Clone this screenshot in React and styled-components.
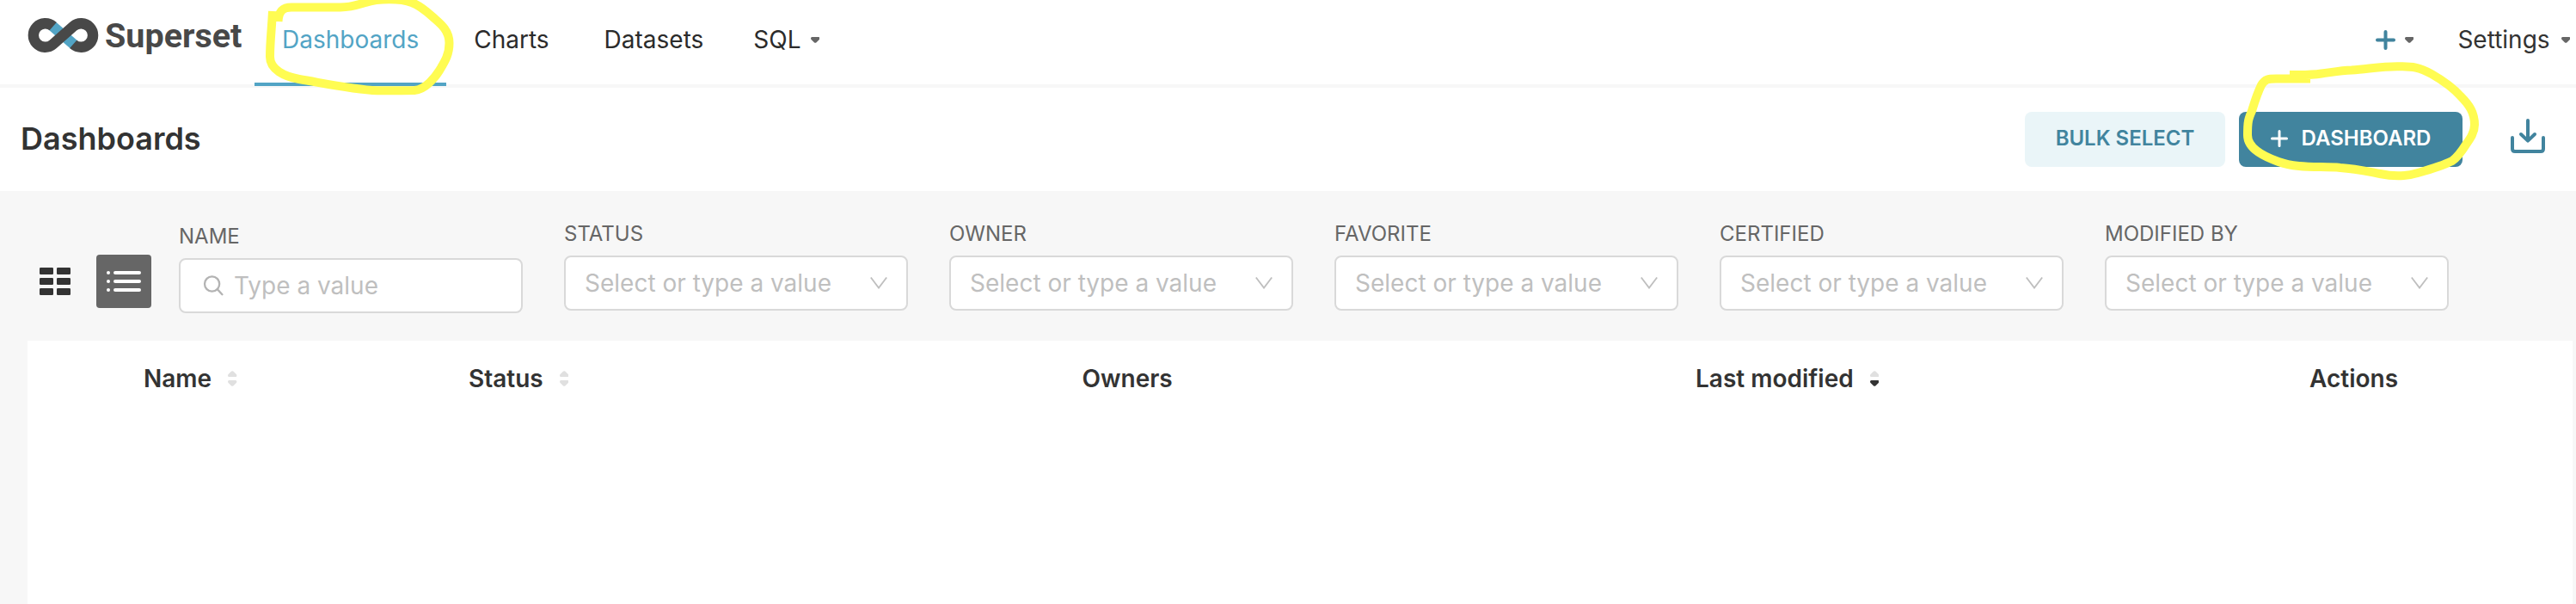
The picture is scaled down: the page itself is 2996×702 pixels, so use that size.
import React from 'react';
import styled, { createGlobalStyle } from 'styled-components';

const GlobalStyle = createGlobalStyle`
  * { box-sizing: border-box; }
  body {
    margin: 0;
    background: #f7f7f7;
    color: #333;
    font-family: Inter, 'Liberation Sans', sans-serif;
    font-size: 28px;
  }
`;

const Page = styled.div`
  position: relative;
  display: flex;
  flex-direction: column;
  height: 702px;
  overflow: hidden;
`;

const NavBar = styled.header`
  display: flex;
  flex: none;
  height: 102px;
  background: #fff;
  border-bottom: 4px solid #f7f7f7;
`;

const Brand = styled.a`
  display: flex;
  width: 296px;
  padding: 19px 0 0 32px;
`;

const BrandName = styled.span`
  margin-left: 7px;
  font: 700 39.5px/46px Roboto, sans-serif;
  color: #484848;
`;

const LogoMark = styled.svg`
  display: block;
  margin-top: 1px;
`;

const NavItem = styled.a`
  display: flex;
  align-items: center;
  gap: ${(p) => p.$gap || 0}px;
  height: 100px;
  padding: 0 32px 4px ${(p) => p.$left || 32}px;
  border-bottom: 4px solid ${(p) => (p.$active ? '#52a4c5' : 'transparent')};
  color: ${(p) => (p.$active ? '#52a4c5' : '#2b2b2b')};
`;

const NavRight = styled.div`
  display: flex;
  align-items: center;
  height: 92px;
  margin-left: auto;
  padding-right: 7px;
  gap: 51px;
`;

const NavMenu = styled.a`
  display: flex;
  align-items: center;
  gap: ${(p) => p.$gap}px;
`;

const TitleBar = styled.section`
  display: flex;
  align-items: center;
  flex: none;
  height: 120px;
  padding: 0 36px 0 24px;
  background: #fff;
`;

const Title = styled.h1`
  margin: 0 auto 2px 0;
  font-size: 36px;
  font-weight: 600;
  line-height: 44px;
`;

const Button = styled.button`
  display: flex;
  align-items: center;
  justify-content: center;
  gap: 16px;
  width: ${(p) => p.$width}px;
  height: 64px;
  margin-left: 16px;
  padding: 0 0 2px;
  border: 0;
  border-radius: 8px;
  background: ${(p) => (p.$primary ? '#41849e' : '#eaf5f8')};
  color: ${(p) => (p.$primary ? '#fff' : '#41849e')};
  font: 600 24px/32px Inter, sans-serif;
`;

const ImportButton = styled.a`
  display: flex;
  margin: 0 0 8px 56px;
`;

const FilterBar = styled.section`
  display: flex;
  align-items: flex-start;
  flex: none;
  height: 174px;
  padding: 34px 0 0 32px;
`;

const ViewToggle = styled.div`
  display: flex;
  gap: 16px;
  margin: 40px 32px 0 0;
`;

const ViewButton = styled.div`
  display: flex;
  align-items: center;
  justify-content: center;
  width: 64px;
  height: 62px;
  border-radius: 4px;
  background: ${(p) => (p.$active ? '#666' : 'transparent')};
`;

const Field = styled.label`
  display: flex;
  flex-direction: column;
  gap: 9px;
  width: 400px;
  margin: ${(p) => p.$drop || 0}px 48px 0 0;
`;

const FieldLabel = styled.span`
  font-size: 24px;
  line-height: 32px;
  color: #666;
`;

const Control = styled.div`
  display: flex;
  align-items: center;
  gap: 12px;
  height: 64px;
  padding: 0 22px 0 ${(p) => p.$left}px;
  border: 2px solid #d9d9d9;
  border-radius: 8px;
  background: #fff;
  color: #bfbfbf;
`;

const Placeholder = styled.span`
  flex: 1;
  line-height: 40px;
  white-space: nowrap;
`;

const TablePanel = styled.main`
  flex: 1;
  margin: 0 4px 0 32px;
  background: #fff;
`;

const HeaderRow = styled.div`
  display: grid;
  grid-template-columns: 378px 713.5px 713.5px 714px 1fr;
  align-items: center;
  height: 88px;
  padding-left: 135px;
`;

const HeaderCell = styled.div`
  display: flex;
  align-items: center;
  gap: 19px;
  font-weight: 600;
  line-height: 40px;
`;

const MarkerLayer = styled.svg`
  position: absolute;
  top: 0;
  left: 0;
  pointer-events: none;
`;

const CARET = 'M1.4 0H9Q10.4 0 10.4 1.6 10.4 2.6 9.6 3.3L6.3 6.4Q5.2 7.3 4.1 6.4L.8 3.3Q0 2.6 0 1.6 0 0 1.4 0Z';

const Caret = () => (
  <svg width="10.4" height="7" viewBox="0 0 10.4 7">
    <path d={CARET} fill="#666" />
  </svg>
);

const Plus = ({ size, weight, color }) => (
  <svg width={size} height={size} viewBox={`0 0 ${size} ${size}`}>
    <path
      d={`M${weight / 2} ${size / 2}H${size - weight / 2}M${size / 2} ${weight / 2}V${size - weight / 2}`}
      stroke={color}
      strokeWidth={weight}
      strokeLinecap="round"
    />
  </svg>
);

const Logo = () => (
  <LogoMark width="83" height="42" viewBox="31.7 20 83 42" fill="none" strokeWidth="12.4">
    <path d="M60.3 29.8 86 52.2" stroke="#52a4c5" />
    <path
      d="M61.4 30.6A13.8 13.8 0 1 0 61.4 51.4L84.9 30.6A13.8 13.8 0 1 1 84.9 51.4"
      stroke="#484848"
    />
  </LogoMark>
);

const Chevron = () => (
  <svg width="20" height="14" viewBox="0 0 20 14">
    <path d="M.8.5 10 12.6 19.2.5" fill="none" stroke="#bfbfbf" strokeWidth="1.8" />
  </svg>
);

const SearchIcon = () => (
  <svg width="24" height="24" viewBox="0 0 24 24" fill="none" stroke="#b3b3b3" strokeWidth="2.3">
    <circle cx="10.6" cy="10" r="8.6" />
    <path d="M16.8 16.2 22.4 22.2" strokeLinecap="round" />
  </svg>
);

const ImportIcon = () => (
  <svg width="40" height="40" viewBox="0 0 40 40" fill="none" stroke="#41849e" strokeWidth="4" strokeLinecap="round" strokeLinejoin="round">
    <path d="M2 22V35Q2 38 5 38H35Q38 38 38 35V22" />
    <path d="M20 2V25M12 18 20 25.6 28 18" />
  </svg>
);

const GridIcon = () => (
  <svg width="36" height="32" viewBox="0 0 36 32" fill="#333">
    {[0, 12, 24].map((y) =>
      [0, 20].map((x) => <rect key={`${x}-${y}`} x={x} y={y} width="16" height="8" rx="1.2" />)
    )}
  </svg>
);

const ListIcon = () => (
  <svg width="40" height="24" viewBox="0 0 40 24" fill="#fff">
    {[0, 10, 20].map((y) => (
      <g key={y}>
        <rect y={y} width="4" height="4" rx="2" />
        <rect x="8" y={y} width="32" height="4" rx="2" />
      </g>
    ))}
  </svg>
);

const Sorter = ({ descending }) => (
  <svg width="10.4" height="18" viewBox="0 0 10.4 18">
    <path d={CARET} fill="#e0e0e0" transform="translate(0 7) scale(1 -1)" />
    <path d={CARET} fill={descending ? '#333' : '#e0e0e0'} transform="translate(0 11)" />
  </svg>
);

const SELECTS = ['STATUS', 'OWNER', 'FAVORITE', 'CERTIFIED', 'MODIFIED BY'];

const COLUMNS = [
  { title: 'Name', sortable: true },
  { title: 'Status', sortable: true },
  { title: 'Owners' },
  { title: 'Last modified', sortable: true, descending: true },
  { title: 'Actions' },
];

export default function App() {
  return (
    <>
      <GlobalStyle />
      <Page>
        <NavBar>
          <Brand>
            <Logo />
            <BrandName>Superset</BrandName>
          </Brand>
          <NavItem $active>Dashboards</NavItem>
          <NavItem>Charts</NavItem>
          <NavItem>Datasets</NavItem>
          <NavItem $left={26} $gap={11}>
            SQL <Caret />
          </NavItem>
          <NavRight>
            <NavMenu $gap={11}>
              <Plus size={23} weight={4} color="#41849e" />
              <Caret />
            </NavMenu>
            <NavMenu $gap={13}>
              Settings <Caret />
            </NavMenu>
          </NavRight>
        </NavBar>

        <TitleBar>
          <Title>Dashboards</Title>
          <Button $width={233}>BULK SELECT</Button>
          <Button $primary $width={260}>
            <Plus size={20} weight={3} color="#fff" />
            DASHBOARD
          </Button>
          <ImportButton>
            <ImportIcon />
          </ImportButton>
        </TitleBar>

        <FilterBar>
          <ViewToggle>
            <ViewButton>
              <GridIcon />
            </ViewButton>
            <ViewButton $active>
              <ListIcon />
            </ViewButton>
          </ViewToggle>
          <Field $drop={3}>
            <FieldLabel>NAME</FieldLabel>
            <Control $left={26}>
              <SearchIcon />
              <Placeholder>Type a value</Placeholder>
            </Control>
          </Field>
          {SELECTS.map((name) => (
            <Field key={name}>
              <FieldLabel>{name}</FieldLabel>
              <Control $left={22}>
                <Placeholder>Select or type a value</Placeholder>
                <Chevron />
              </Control>
            </Field>
          ))}
        </FilterBar>

        <TablePanel>
          <HeaderRow>
            {COLUMNS.map((c) => (
              <HeaderCell key={c.title}>
                {c.title}
                {c.sortable && <Sorter descending={c.descending} />}
              </HeaderCell>
            ))}
          </HeaderRow>
        </TablePanel>

        <MarkerLayer width="2996" height="230" viewBox="0 0 2996 230" fill="none" stroke="#fffc52" strokeWidth="10">
          <path d="M317 13C316 34 314 49 314 66C314 81 331 89 348 92C378 97 410 104 439 105.2C454 105.7 468 105 482 105C495 104 506 90 511 82C517 72 522.5 64 522.5 50C522.5 36 513 28 506 22C498 15 490 7 479 3C466-2 440-2 425 3C415 6 408 8.5 396 8.5H339C329 8.5 324 13 323.5 25" />
          <path d="M2663 87C2679 87 2687 87.5 2700 85.5C2712 84 2722 82 2735 81.5C2755 80 2770 77.2 2788 77.2C2806 77 2814 78 2828 86C2842 94 2853 102 2862 112C2872 122 2878 131 2878 145C2878 154 2873 161 2868 168C2863 176 2859 182 2852 187C2840 193 2826 197 2812 201C2799 205 2782 205 2768 202C2752 199 2739 196 2722 195C2698 193 2672 196 2650 188C2636 183 2614 174 2614 157C2614 141 2615 138 2619 129C2623 116 2625 109 2630 99C2634 92 2638 91.5 2647 91.5H2687" />
        </MarkerLayer>
      </Page>
    </>
  );
}
